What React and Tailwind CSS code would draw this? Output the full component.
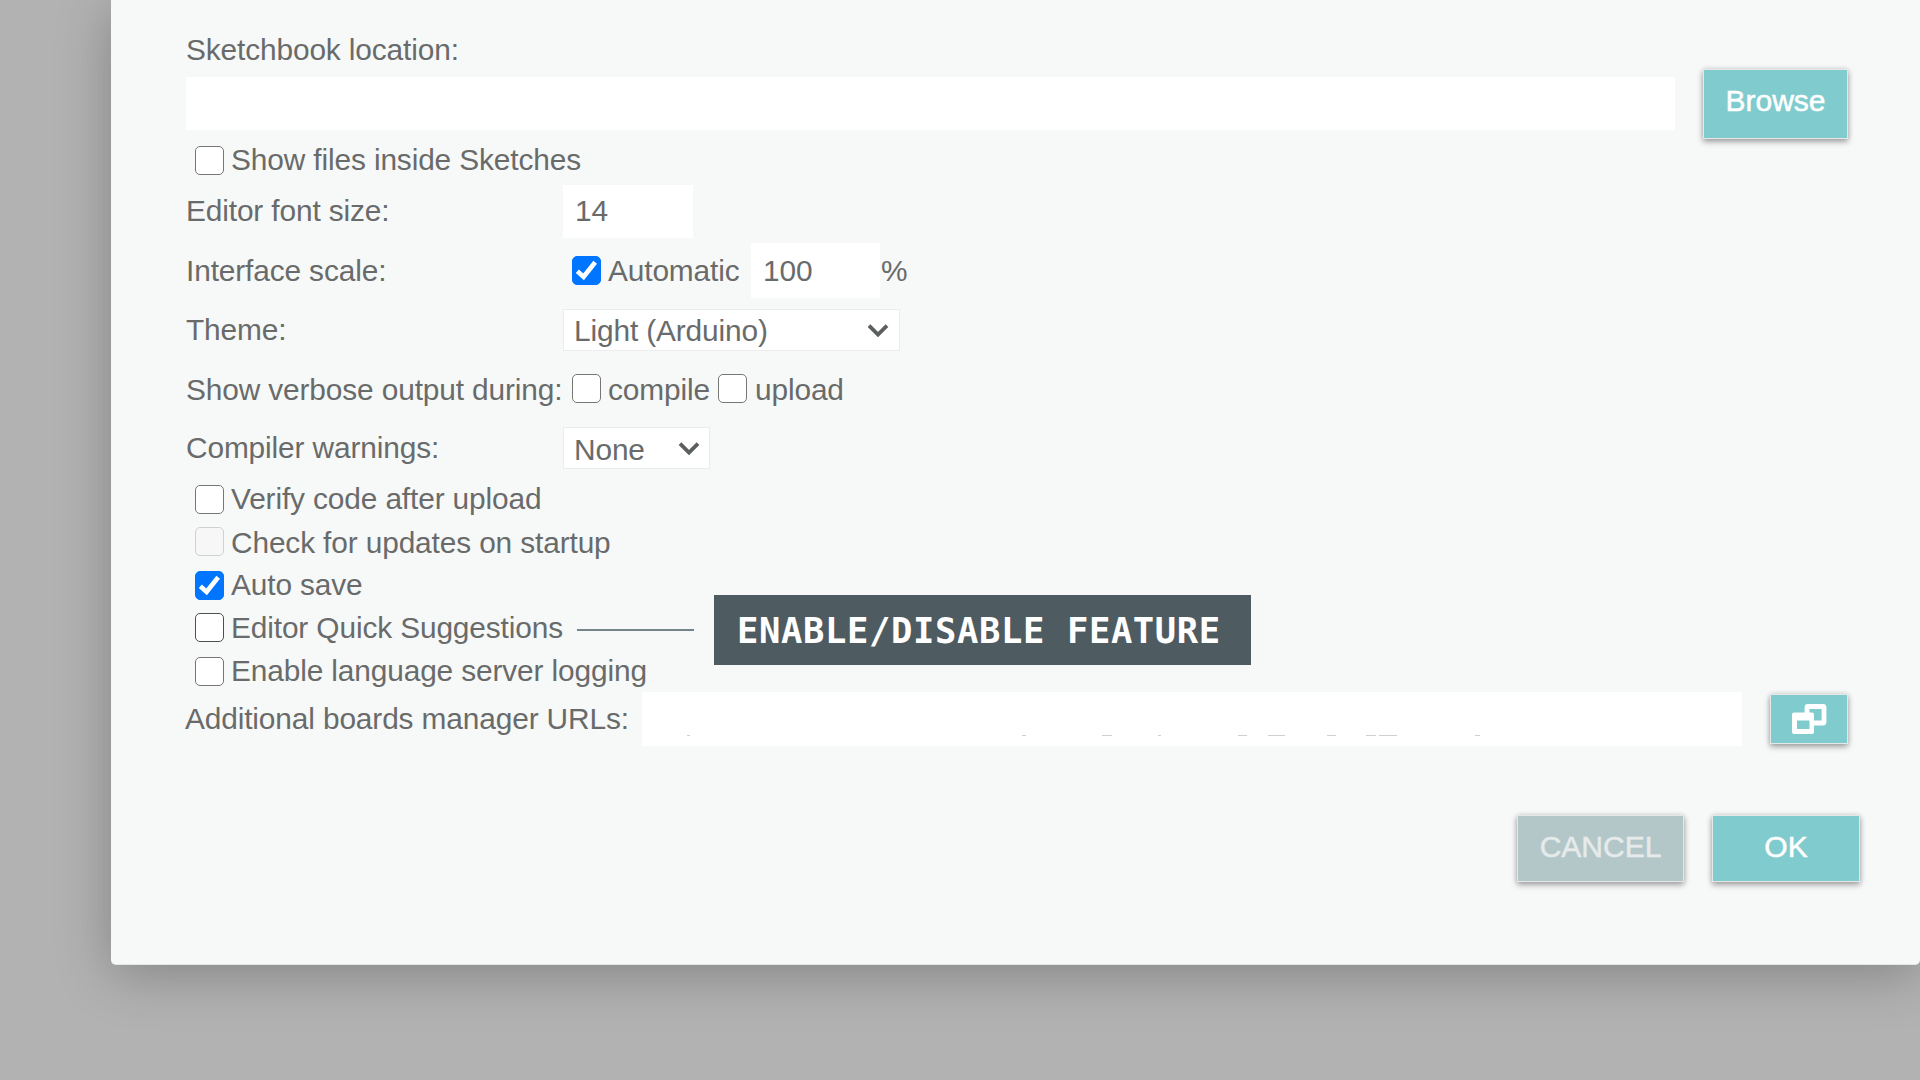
import React from "react";

function Check({ checked, disabled, dark, className }) {
  const tone = checked
    ? "border-[#0075ff] bg-[#0075ff]"
    : disabled
    ? "border-[#d0d1d1] bg-[#f7f7f7]"
    : dark
    ? "border-[#4f4f4f] bg-white"
    : "border-[#767676] bg-white";
  return (
    <span className={"block h-[29px] w-[29px] shrink-0 rounded-[5px] border-[1.5px] " + tone + " " + className}>
      {checked && (
        <svg viewBox="0 0 27 27" className="block h-full w-full">
          <path d="M4.3 14.2 10.6 19.8 22.2 5.2" fill="none" stroke="#fff" strokeWidth="4.6" />
        </svg>
      )}
    </span>
  );
}

function Row({ className, children }) {
  return <div className={"flex items-start whitespace-nowrap " + className}>{children}</div>;
}

function Arrow({ className }) {
  return (
    <svg viewBox="0 0 22 14" className={"h-[14px] w-[22px] shrink-0 " + className}>
      <path d="M2 1.7 11 10.5 20 1.7" fill="none" stroke="#5c5f60" strokeWidth="3.8" />
    </svg>
  );
}

const remnants = [[687, 3], [1022, 4], [1102, 10], [1158, 3], [1238, 9], [1268, 17], [1327, 9], [1366, 10], [1379, 18], [1475, 5]];

const button =
  "box-border border-[1.5px] border-[#e6e8e8] text-center text-[30px] leading-[36px] tracking-normal [-webkit-text-stroke:0.5px_currentColor] shadow-[0_3px_6px_rgba(0,0,0,0.32),0_0_5px_rgba(0,0,0,0.14)]";

export default function App() {
  return (
    <div className="h-[1080px] w-[1920px] overflow-hidden bg-[#b2b2b2] pl-[111px] font-['Liberation_Sans',Arial,sans-serif] text-[29.85px] leading-[36px] tracking-[-0.13px] text-[#696b6b]">
      <div className="h-[965px] w-[1809px] rounded-b-[5px] border-b border-[#e4e6e6] bg-[#f7f9f8] pl-[75px] pt-[32px] shadow-[0_9px_54px_rgba(0,0,0,0.26)]">
        <Row className="h-[37px]">Sketchbook location:</Row>
        <Row className="h-[74px]">
          <div className="mt-[8px] h-[53px] w-[1489px] shrink-0 bg-white" />
          <div className={button + " ml-[28px] h-[70px] w-[145px] shrink-0 bg-[#7fcbcd] pt-[13px] text-white"}>Browse</div>
        </Row>
        <Row className="h-[41px]">
          <Check className="mt-[3px] ml-[9px]" />
          <span className="-mt-px ml-[7px]">Show files inside Sketches</span>
        </Row>
        <Row className="h-[59px]">
          <span className="mt-[9px] w-[377px]">Editor font size:</span>
          <div className="mt-px h-[53px] w-[130px] bg-white pt-[8px] pl-[12px]">14</div>
        </Row>
        <Row className="h-[66px]">
          <span className="mt-[10px] w-[377px]">Interface scale:</span>
          <Check checked className="mt-[13px] ml-[9px]" />
          <span className="mt-[10px] ml-[7px] w-[143px]">Automatic</span>
          <div className="h-[55px] w-[129px] bg-white pt-[10px] pl-[12px]">100</div>
          <span className="mt-[10px] ml-px">%</span>
        </Row>
        <Row className="h-[64px]">
          <span className="mt-[3px] w-[377px]">Theme:</span>
          <div className="flex h-[42px] w-[337px] justify-between border-[1.5px] border-[#ebeced] bg-white pt-[3px] pr-[10px] pl-[10px]">
            <span>Light (Arduino)</span>
            <Arrow className="mt-[11px]" />
          </div>
        </Row>
        <Row className="h-[54px]">
          <span className="-mt-px w-[377px]">Show verbose output during:</span>
          <Check className="mt-px ml-[9px]" />
          <span className="-mt-px ml-[7px] w-[110px]">compile</span>
          <Check className="mt-px" />
          <span className="-mt-px ml-[8px]">upload</span>
        </Row>
        <Row className="h-[55px]">
          <span className="mt-[3px] w-[377px]">Compiler warnings:</span>
          <div className="flex h-[42px] w-[147px] justify-between border-[1.5px] border-[#ebeced] bg-white pt-[4px] pr-[9px] pl-[10px]">
            <span>None</span>
            <Arrow className="mt-[10px]" />
          </div>
        </Row>
        <Row className="h-[43px]">
          <Check className="mt-[3px] ml-[9px]" />
          <span className="-mt-px ml-[7px]">Verify code after upload</span>
        </Row>
        <Row className="h-[42px]">
          <Check disabled className="mt-[2px] ml-[9px]" />
          <span className="ml-[7px]">Check for updates on startup</span>
        </Row>
        <Row className="h-[43px]">
          <Check checked className="mt-[4px] ml-[9px]" />
          <span className="ml-[7px]">Auto save</span>
        </Row>
        <Row className="relative h-[43px]">
          <Check dark className="mt-[3px] ml-[9px]" />
          <span className="ml-[7px]">Editor Quick Suggestions</span>
          <div className="absolute -top-[15px] left-[391px] flex items-center">
            <div className="h-[2px] w-[117px] bg-[#75838a]" />
            <div className="ml-[20px] h-[70px] w-[537px] bg-[#4e5b61] pl-[23px] font-['DejaVu_Sans_Mono',monospace] text-[35.5px] leading-[72px] font-bold tracking-[0.62px] text-white">
              ENABLE/DISABLE FEATURE
            </div>
          </div>
        </Row>
        <Row className="h-[39px]">
          <Check className="mt-[4px] ml-[9px]" />
          <span className="ml-[7px]">Enable language server logging</span>
        </Row>
        <Row className="h-[123px]">
          <span className="mt-[9px] -ml-px w-[457px] shrink-0">Additional boards manager URLs:</span>
          <svg viewBox="642 692 1100 54" className="h-[54px] w-[1100px] shrink-0 bg-white">
            {remnants.map(([x, w]) => (
              <rect key={x} x={x} y="735" width={w} height="1" fill="#cfcfcf" />
            ))}
          </svg>
          <div className={button + " mt-[2px] ml-[28px] h-[50px] w-[78px] shrink-0 bg-[#7fcbcd]"}>
            <svg viewBox="1771 695 76 48" className="block h-[48px] w-[76px]">
              <rect x="1807" y="706.5" width="17" height="16.5" rx="1" fill="none" stroke="#fff" strokeWidth="4.8" />
              <rect x="1792" y="712.5" width="22" height="21.5" rx="2" fill="#fff" />
              <rect x="1797" y="720.5" width="12.5" height="8.5" fill="#7fcbcd" />
            </svg>
          </div>
        </Row>
        <Row className="h-[68px]">
          <div className={button + " ml-[1331px] h-[67px] w-[167px] shrink-0 bg-[#b3c7c9] pt-[13px] text-[#e6eaea]"}>CANCEL</div>
          <div className={button + " ml-[28px] h-[67px] w-[148px] shrink-0 bg-[#7fcbcd] pt-[13px] text-white"}>OK</div>
        </Row>
      </div>
    </div>
  );
}
